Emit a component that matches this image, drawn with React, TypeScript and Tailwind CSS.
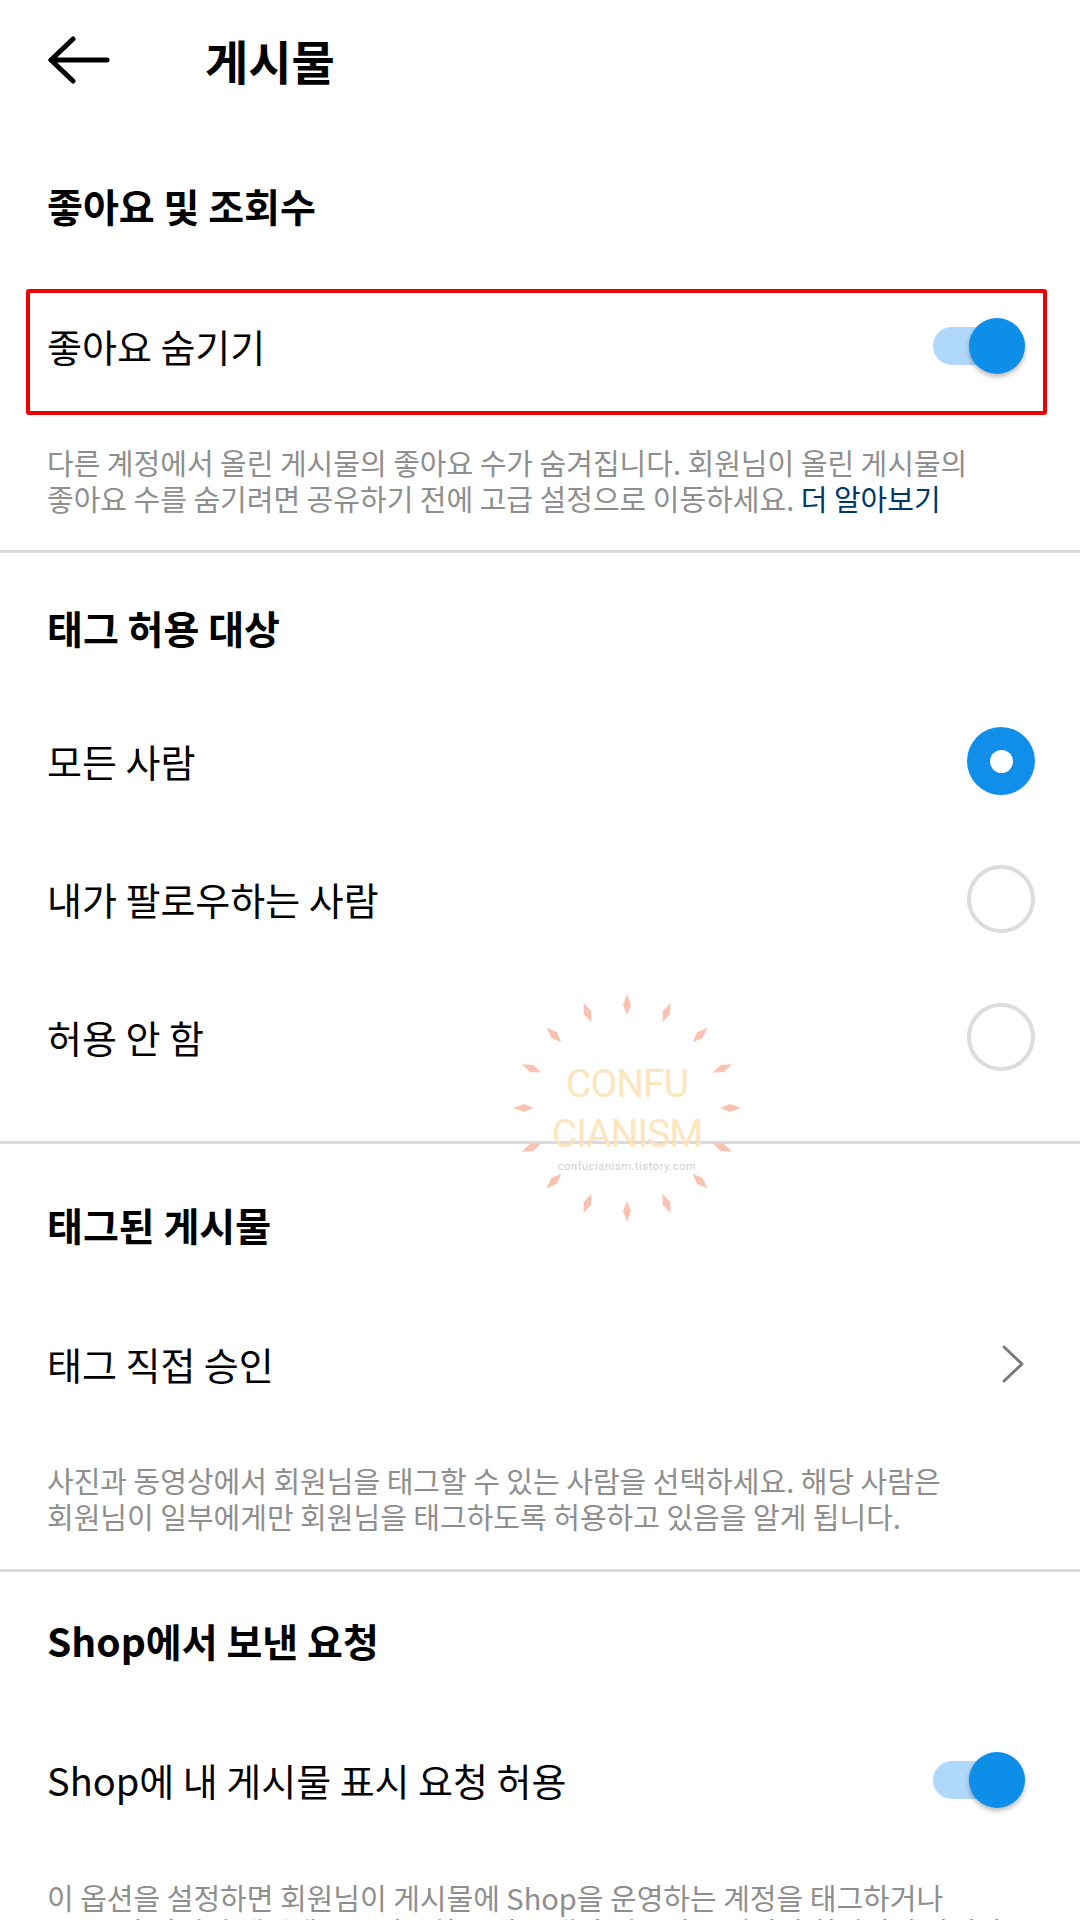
import React from "react";

const KR = "font-['Noto_Sans_CJK_KR','Noto_Sans',sans-serif]";

function Toggle() {
  return (
    <div className="relative w-[92px] h-[56px] shrink-0">
      <div className="absolute left-0 top-[9px] w-[80px] h-[38px] rounded-full bg-[#b0d8fb]" />
      <div className="absolute right-0 top-0 w-[56px] h-[56px] rounded-full bg-[#0d8ee9] shadow-[0_3px_5px_rgba(0,0,0,0.28)]" />
    </div>
  );
}

function Radio({ on }: { on?: boolean }) {
  if (on) {
    return (
      <div className="w-[68px] h-[68px] rounded-full bg-[#0f8eea] flex items-center justify-center shrink-0">
        <div className="w-[23px] h-[23px] rounded-full bg-white" />
      </div>
    );
  }
  return <div className="w-[68px] h-[68px] rounded-full border-[4px] border-[#dcdcdc] shrink-0" />;
}

function Divider() {
  return <div className="h-[3px] bg-[#dbdbdb] w-full" />;
}

function SectionTitle({ children, pt, pb }: { children: React.ReactNode; pt: string; pb: string }) {
  return (
    <div className={`${pt} ${pb} px-[47px]`}>
      <div className="text-[39px] leading-[44px] font-bold text-black whitespace-nowrap">{children}</div>
    </div>
  );
}

function Watermark() {
  const spikes = Array.from({ length: 16 }, (_, i) => i * 22.5);
  return (
    <div className="absolute left-[497px] top-[978px] w-[260px] h-[260px] pointer-events-none">
      <svg width="260" height="260" viewBox="0 0 260 260" className="absolute inset-0">
        {spikes.map((a) => (
          <polygon
            key={a}
            points="130,16 134,27 130,37 126,27"
            fill="#f7ad98"
            opacity="0.75"
            transform={`rotate(${a} 130 130)`}
          />
        ))}
      </svg>
      <div className="absolute left-0 right-0 top-[87px] text-center font-['Roboto',sans-serif] text-[39px] leading-[39px] text-[#fde3b6] opacity-90 tracking-[-1px]">
        CONFU
      </div>
      <div className="absolute left-0 right-0 top-[137px] text-center font-['Roboto',sans-serif] text-[39px] leading-[39px] text-[#fde3b6] opacity-90 tracking-[-1px]">
        CIANISM
      </div>
      <div className="absolute left-0 right-0 top-[183px] text-center font-['Roboto',sans-serif] text-[11px] leading-[12px] tracking-[0.6px] text-[#cfcfcf]">
        confucianism.tistory.com
      </div>
    </div>
  );
}

export default function App() {
  return (
    <div className={`relative w-[1080px] h-[1920px] overflow-hidden bg-white ${KR}`}>
      {/* Header */}
      <div className="h-[120px] flex items-center pl-[48px]">
        <svg width="62" height="48" viewBox="0 0 62 48" fill="none" stroke="#000" strokeWidth="5" strokeLinecap="round" strokeLinejoin="round">
          <path d="M3 24H59" />
          <path d="M25 3L3 24L25 45" />
        </svg>
        <div className="ml-[95px] text-[47px] leading-[52px] font-bold text-black">게시물</div>
      </div>

      <SectionTitle pt="pt-[63px]" pb="pb-[62px]">좋아요 및 조회수</SectionTitle>

      {/* Highlighted row */}
      <div className="relative h-[126px] flex items-center justify-between pl-[47px] pr-[55px] pb-[12px]">
        <div className="text-[38px] leading-[44px] text-black">좋아요 숨기기</div>
        <Toggle />
        <div className="absolute left-[26px] right-[33px] top-0 bottom-0 border-[4px] border-[#ee0000] rounded-[3px] pointer-events-none" />
      </div>

      <div className="pt-[29px] pb-[34px] px-[47px] text-[29px] leading-[36px] text-[#8e8e8e] whitespace-nowrap">
        <div>다른 계정에서 올린 게시물의 좋아요 수가 숨겨집니다. 회원님이 올린 게시물의</div>
        <div>
          좋아요 수를 숨기려면 공유하기 전에 고급 설정으로 이동하세요. <span className="text-[#00376b]">더 알아보기</span>
        </div>
      </div>

      <Divider />

      <SectionTitle pt="pt-[52px]" pb="pb-[43px]">태그 허용 대상</SectionTitle>

      {[
        { label: "모든 사람", on: true },
        { label: "내가 팔로우하는 사람", on: false },
        { label: "허용 안 함", on: false },
      ].map((r) => (
        <div key={r.label} className="h-[138px] flex items-center justify-between pl-[47px] pr-[45px]">
          <div className="text-[38px] leading-[44px] text-black">{r.label}</div>
          <Radio on={r.on} />
        </div>
      ))}
      <div className="h-[35px]" />

      <Divider />

      <SectionTitle pt="pt-[58px]" pb="pb-[53px]">태그된 게시물</SectionTitle>

      <div className="h-[130px] flex items-center justify-between pl-[47px] pr-[55px]">
        <div className="text-[38px] leading-[44px] text-black">태그 직접 승인</div>
        <svg width="24" height="38" viewBox="0 0 24 38" fill="none" stroke="#7a7a7a" strokeWidth="3" strokeLinecap="round" strokeLinejoin="round">
          <path d="M3 2L21 19L3 36" />
        </svg>
      </div>

      <div className="pt-[33px] pb-[35px] px-[47px] text-[29px] leading-[36px] text-[#8e8e8e] whitespace-nowrap">
        <div>사진과 동영상에서 회원님을 태그할 수 있는 사람을 선택하세요. 해당 사람은</div>
        <div>회원님이 일부에게만 회원님을 태그하도록 허용하고 있음을 알게 됩니다.</div>
      </div>

      <Divider />

      <SectionTitle pt="pt-[46px]" pb="pb-[53px]">Shop에서 보낸 요청</SectionTitle>

      <div className="h-[130px] flex items-center justify-between pl-[47px] pr-[55px]">
        <div className="text-[38px] leading-[44px] text-black">Shop에 내 게시물 표시 요청 허용</div>
        <Toggle />
      </div>

      <div className="pt-[35px] px-[47px] text-[29px] leading-[34px] text-[#8e8e8e] whitespace-nowrap">
        <div>이 옵션을 설정하면 회원님이 게시물에 Shop을 운영하는 계정을 태그하거나</div>
        <div>Shop과 관련된 해시태그를 사용하는 경우 해당 비즈니스 계정이 회원님의 사진과</div>
      </div>

      <Watermark />
    </div>
  );
}
